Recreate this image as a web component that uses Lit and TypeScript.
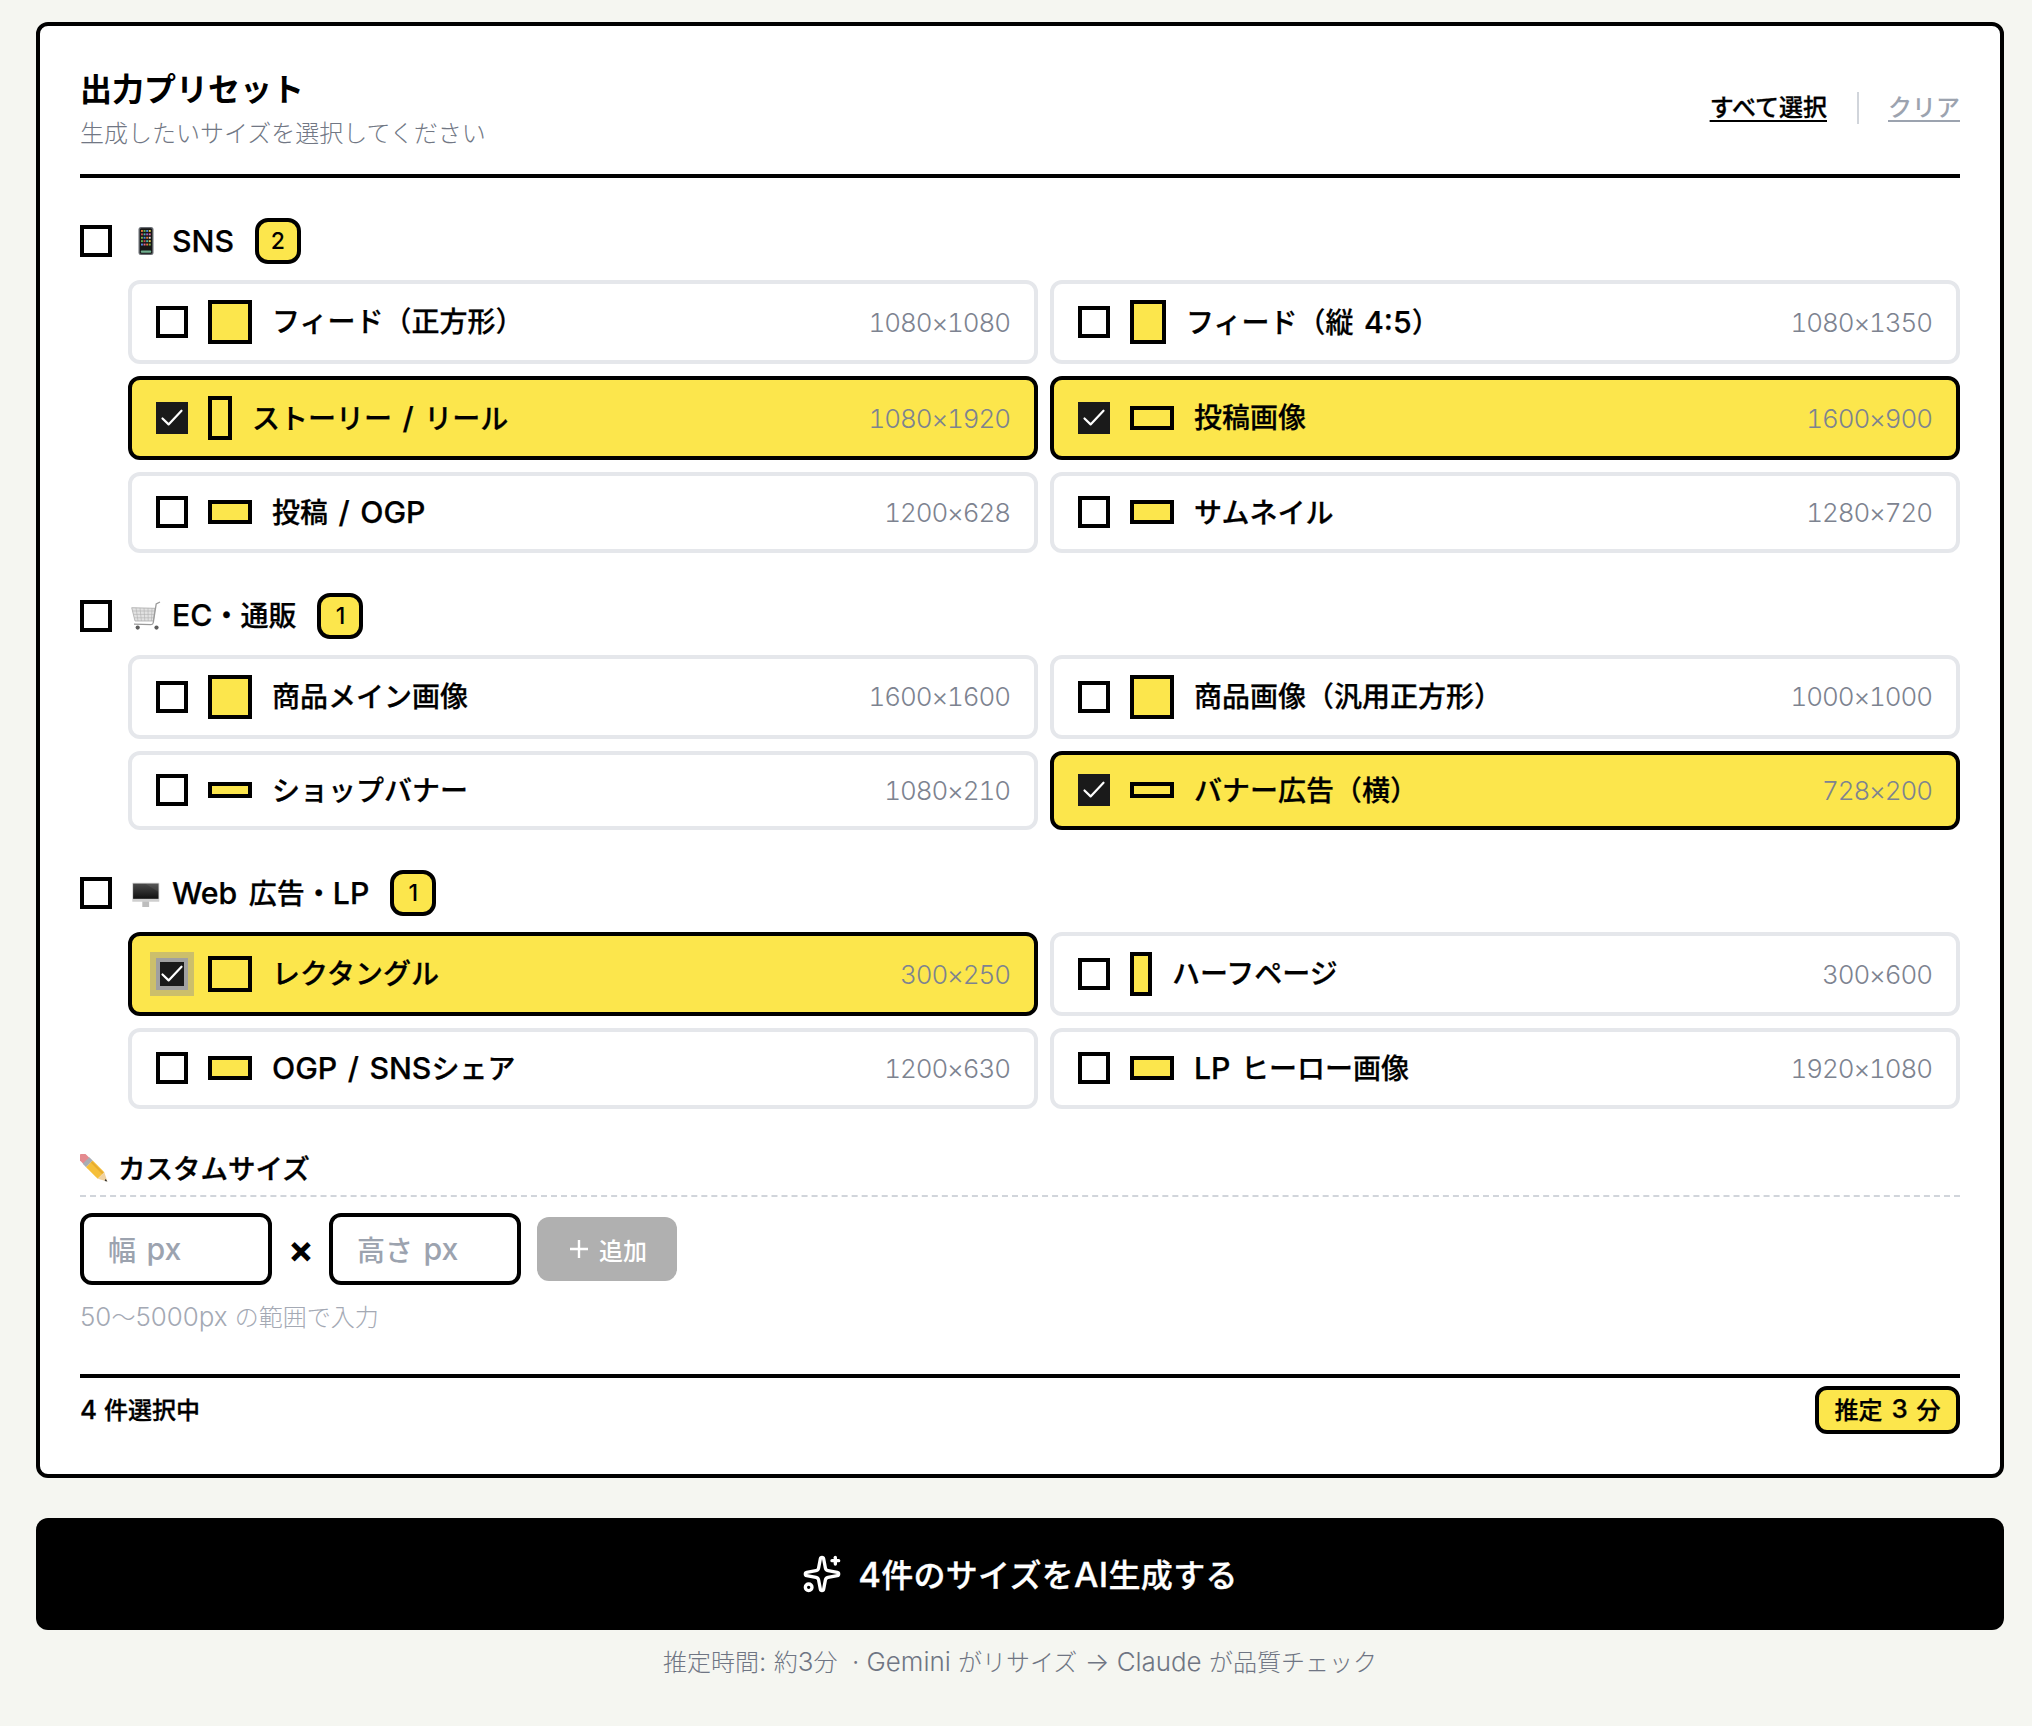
import { LitElement, html, css, svg } from "lit";
import { customElement } from "lit/decorators.js";

type Opt = { label: string; dim: string; w: number; h: number; on?: boolean; focus?: boolean };
type Group = { emoji: string; name: string; count: number; opts: Opt[] };

const groups: Group[] = [
  { emoji: "phone", name: "SNS", count: 2, opts: [
    { label: "フィード（正方形）", dim: "1080×1080", w: 44, h: 44 },
    { label: "フィード（縦 4:5）", dim: "1080×1350", w: 36, h: 44 },
    { label: "ストーリー / リール", dim: "1080×1920", w: 24, h: 44, on: true },
    { label: "投稿画像", dim: "1600×900", w: 44, h: 24, on: true },
    { label: "投稿 / OGP", dim: "1200×628", w: 44, h: 24 },
    { label: "サムネイル", dim: "1280×720", w: 44, h: 24 },
  ]},
  { emoji: "cart", name: "EC・通販", count: 1, opts: [
    { label: "商品メイン画像", dim: "1600×1600", w: 44, h: 44 },
    { label: "商品画像（汎用正方形）", dim: "1000×1000", w: 44, h: 44 },
    { label: "ショップバナー", dim: "1080×210", w: 44, h: 16 },
    { label: "バナー広告（横）", dim: "728×200", w: 44, h: 16, on: true },
  ]},
  { emoji: "desktop", name: "Web 広告・LP", count: 1, opts: [
    { label: "レクタングル", dim: "300×250", w: 44, h: 36, on: true, focus: true },
    { label: "ハーフページ", dim: "300×600", w: 22, h: 44 },
    { label: "OGP / SNSシェア", dim: "1200×630", w: 44, h: 24 },
    { label: "LP ヒーロー画像", dim: "1920×1080", w: 44, h: 24 },
  ]},
];

/* Latin runs are set slightly larger than the CJK around them. */
const t = (s: string) =>
  s.split(/([\x20-\x7e·→]+)/).map((p, i) => (i % 2 ? html`<span class="l">${p}</span>` : p));

const appColors = ["#e8793a", "#66b24d", "#4d8de0", "#e0c94a", "#c84b4b", "#4db5b0", "#9a5ed0", "#e06a9a", "#7fb34d", "#4d8de0", "#e8793a", "#d8d8d8", "#66b24d", "#c84b4b", "#4db5b0", "#e0c94a", "#4d8de0", "#e06a9a", "#e8793a", "#7fb34d"];

const emoji: Record<string, unknown> = {
  phone: svg`<svg class="emoji" viewBox="0 0 30 30"><rect x="7.5" y="1" width="15" height="28" rx="2.5" fill="#6a6e74"/><rect x="8.8" y="2.2" width="12.4" height="25.6" rx="1.5" fill="#161616"/>
    ${appColors.map((c, i) => svg`<rect x="${10 + (i % 4) * 2.6}" y="${4 + Math.floor(i / 4) * 3.4}" width="1.9" height="1.9" fill="${c}"/>`)}
    <rect x="9.8" y="24.6" width="10.4" height="2.2" rx=".8" fill="#6fae8e"/></svg>`,
  cart: svg`<svg class="emoji" viewBox="0 0 30 30"><path d="M.7 6.7 L24 7.3 L22.3 20 L4 20 Z" fill="#e2e2e2" stroke="#a9a9a9" stroke-width=".8"/><path d="M1.8 10H23.5M2.7 13.4H23M3.4 16.8H22.6M5 6.8L7 20M9 6.9L10.4 20M13 7L13.8 20M17 7.1L17.2 20M21 7.2L20.4 20" stroke="#b0b0b0" stroke-width=".6" fill="none"/><path d="M29 1 L25.2 3 L22.3 21.5 Q22 23.6 20 23.6 L3 23.2" stroke="#9a9a9a" stroke-width="1.3" fill="none"/><circle cx="6.7" cy="26.6" r="2.1" fill="#5d5d5d"/><circle cx="25.5" cy="26.6" r="2.1" fill="#5d5d5d"/></svg>`,
  desktop: svg`<svg class="emoji" viewBox="0 0 30 30"><defs><linearGradient id="scr" x1="0" y1="0" x2="0" y2="1"><stop offset="0" stop-color="#4a4a4a"/><stop offset="1" stop-color="#101010"/></linearGradient></defs><rect x="11.3" y="23" width="6.8" height="6" fill="#bdbdbd"/><rect x="1.3" y="4.8" width="27" height="19" rx=".6" fill="#cfcfcf"/><rect x="2.1" y="5.6" width="25.4" height="15.2" fill="url(#scr)"/><path d="M14 5.6H27.5V14Z" fill="#fff" opacity=".07"/></svg>`,
  pencil: svg`<svg class="emoji pencil" viewBox="0 0 30 30" fill="none"><path d="M3 3.5L6 6.5" stroke="#e48a8f" stroke-width="8.6" stroke-linecap="round"/><path d="M6 6.5L9.4 9.9" stroke="#a9adb3" stroke-width="9.4"/><path d="M9.4 9.9L21 21.5" stroke="#f5bf3a" stroke-width="9.4"/><path d="M9.4 9.9L21 21.5" stroke="#d99a24" stroke-width="2" transform="translate(2 -2)" opacity=".5"/><path d="M24.3 18.2L17.7 24.8L27.4 27.6Z" fill="#f0d2a0"/><path d="M25.6 24.7L24.6 26.9L27.4 27.6Z" fill="#333"/></svg>`,
};

const check = svg`<svg class="chk" viewBox="0 0 32 32" fill="none" stroke="#fff" stroke-width="2.2" stroke-linecap="round" stroke-linejoin="round"><path d="M6.5 16.5L12.6 22.4L25.5 8.7"/></svg>`;

@customElement("app-root")
export class AppRoot extends LitElement {
  static styles = css`
    :host { display: block; min-height: 1726px; background: #f5f6f1; color: #000;
      font-family: Inter, "Noto Sans CJK JP", sans-serif; box-sizing: border-box; padding: 22px 28px 0 36px; }
    * { box-sizing: border-box; }
    .l { font-size: 1.08em; word-spacing: 2.5px; }
    .card { border: 4px solid #000; border-radius: 12px; background: #fff; padding: 40px; }
    .head { display: flex; justify-content: space-between; align-items: center; border-bottom: 4px solid #000; height: 112px; padding-bottom: 20px; }
    .head h1 { margin: 0; font-size: 32px; line-height: 44px; font-weight: 700; }
    .head p { margin: 4px 0 0; font-size: 24px; line-height: 36px; color: #717784; font-weight: 300; }
    .acts { display: flex; align-items: center; font-size: 24px; line-height: 32px; margin-bottom: 4px; }
    .acts a { text-decoration: underline; text-underline-offset: 4px; font-weight: 500; -webkit-text-stroke: 0.3px #000; color: #000; }
    .acts a.clr { color: #9ca3af; font-weight: 500; -webkit-text-stroke: 0; }
    .acts i { display: block; width: 2px; height: 32px; margin: 0 29px 0 30px; background: #d1d5db; }
    .group { margin-top: 40px; }
    .ghead { display: flex; align-items: center; height: 46px; margin-bottom: 16px; }
    .box { flex: none; width: 32px; height: 32px; border: 4px solid #000; background: #fff; display: flex; align-items: center; justify-content: center; }
    .box.on { background: #1a1a1a; border-color: #1a1a1a; }
    .box.focus { border-color: #a0a0a0; outline: 6px solid #ccbf6b; }
    .chk { width: 32px; height: 32px; flex: none; }
    .emoji { flex: none; width: 30px; height: 30px; margin-left: 19px; margin-right: 11px; }
    .gname { font-size: 28px; line-height: 40px; font-weight: 500; -webkit-text-stroke: 0.25px #000; }
    .gname .l { word-spacing: 3.5px; }
    .count { margin-left: 21px; width: 46px; height: 46px; border: 4px solid #000; border-radius: 13px; background: #fce64c; display: flex; align-items: center; justify-content: center; font-size: 23px; font-weight: 500; }
    .grid { display: grid; grid-template-columns: 1fr 1fr; gap: 12px; margin-left: 48px; }
    .opt { display: flex; align-items: center; border: 4px solid #e5e7eb; border-radius: 12px; background: #fff; padding: 16px 24px; }
    .opt.on { background: #fce64c; border-color: #000; }
    .prev { flex: none; margin-left: 20px; margin-right: 20px; border: 4px solid #000; background: #fce64c; }
    .lbl { flex: 1; font-size: 28px; line-height: 37.5px; padding-top: 2px; font-weight: 500; -webkit-text-stroke: 0.25px #000; white-space: pre; }
    .dim { font-size: 26px; line-height: 39px; font-weight: 300; color: #7d8390; font-variant-numeric: tabular-nums; letter-spacing: -1.1px; }
    .custom { margin-top: 42.5px; }
    .chead { display: flex; align-items: center; height: 36px; }
    .chead .emoji { margin: 0 8px 0 0; }
    .chead span { font-size: 27.5px; font-weight: 500; -webkit-text-stroke: 0.35px #000; line-height: 36px; }
    .cform { margin-top: 8px; padding-top: 16px; border-top: 2px dashed #d1d5db; display: flex; align-items: center; gap: 16px; }
    .inp { width: 192px; height: 72px; border: 4px solid #000; border-radius: 12px; display: flex; align-items: center; padding-left: 24px; font-size: 28px; font-weight: 500; color: #9ca3af; white-space: pre; }
    .x { font-size: 38px; font-weight: 700; width: 25px; text-align: center; line-height: 1; }
    .add { width: 140px; height: 64px; border-radius: 12px; background: #b0b0b0; color: #fff; display: flex; align-items: center; justify-content: center; gap: 10px; padding-left: 2px; font-size: 24px; font-weight: 500; }
    .add svg { width: 20px; height: 20px; }
    .hint { margin-top: 14px; font-size: 24px; line-height: 36px; font-weight: 300; color: #a4a9b4; }
    .hint .l, .foot .l, .cap .l { word-spacing: 0; }
    .foot { margin-top: 38px; border-top: 4px solid #000; padding-top: 8px; display: flex; justify-content: space-between; align-items: center; }
    .foot b { font-size: 24px; font-weight: 500; -webkit-text-stroke: 0.3px #000; white-space: pre; padding-bottom: 3px; }
    .pill { width: 145px; height: 48px; border: 4px solid #000; border-radius: 12px; background: #fce64c; display: flex; align-items: center; justify-content: center; padding-bottom: 3px; font-size: 24px; font-weight: 500; -webkit-text-stroke: 0.25px #000; white-space: pre; }
    .pill .l { word-spacing: 2px; }
    .go { margin-top: 40px; height: 112px; border-radius: 12px; background: #000; color: #fff; display: flex; align-items: center; justify-content: center; gap: 16px; font-size: 32px; font-weight: 500; -webkit-text-stroke: 0.3px #fff; letter-spacing: 0.3px; }
    .go svg { width: 40px; height: 40px; }
    .go span { padding-bottom: 3px; }
    .cap { text-align: center; margin-top: 15px; font-size: 24px; line-height: 34px; font-weight: 300; color: #6f7583; white-space: pre; }
  `;

  render() {
    return html`
      <div class="card">
        <div class="head">
          <div><h1>出力プリセット</h1><p>生成したいサイズを選択してください</p></div>
          <div class="acts"><a>すべて選択</a><i></i><a class="clr">クリア</a></div>
        </div>
        ${groups.map((g) => html`
          <div class="group">
            <div class="ghead">
              <div class="box"></div>${emoji[g.emoji]}
              <span class="gname">${t(g.name)}</span><span class="count">${g.count}</span>
            </div>
            <div class="grid">
              ${g.opts.map((o) => html`
                <div class="opt ${o.on ? "on" : ""}">
                  <div class="box ${o.on ? "on" : ""} ${o.focus ? "focus" : ""}">${o.on ? check : ""}</div>
                  <div class="prev" style="width:${o.w}px;height:${o.h}px"></div>
                  <span class="lbl">${t(o.label)}</span>
                  <span class="dim">${o.dim}</span>
                </div>`)}
            </div>
          </div>`)}
        <div class="custom">
          <div class="chead">${emoji.pencil}<span>カスタムサイズ</span></div>
          <div class="cform">
            <div class="inp">${t("幅 px")}</div><span class="x">×</span><div class="inp">${t("高さ px")}</div>
            <div class="add"><svg viewBox="0 0 20 20" fill="none" stroke="#fff" stroke-width="2.4"><path d="M1 10H19M10 1V19"/></svg><span>追加</span></div>
          </div>
          <div class="hint">${t("50〜5000px の範囲で入力")}</div>
        </div>
        <div class="foot"><b>${t("4 件選択中")}</b><span class="pill">${t("推定 3 分")}</span></div>
      </div>
      <div class="go">
        <svg viewBox="0 0 24 24" fill="none" stroke="#fff" stroke-width="2" stroke-linecap="round" stroke-linejoin="round"><path d="M11.017 2.814a1 1 0 0 1 1.966 0l1.051 5.558a2 2 0 0 0 1.594 1.594l5.558 1.051a1 1 0 0 1 0 1.966l-5.558 1.051a2 2 0 0 0-1.594 1.594l-1.051 5.558a1 1 0 0 1-1.966 0l-1.051-5.558a2 2 0 0 0-1.594-1.594l-5.558-1.051a1 1 0 0 1 0-1.966l5.558-1.051a2 2 0 0 0 1.594-1.594z"/><path d="M20 2v4"/><path d="M22 4h-4"/><circle cx="4" cy="20" r="2"/></svg>
        <span>${t("4件のサイズをAI生成する")}</span>
      </div>
      <div class="cap">${t("推定時間: 約3分  · Gemini がリサイズ → Claude が品質チェック")}</div>
    `;
  }
}
